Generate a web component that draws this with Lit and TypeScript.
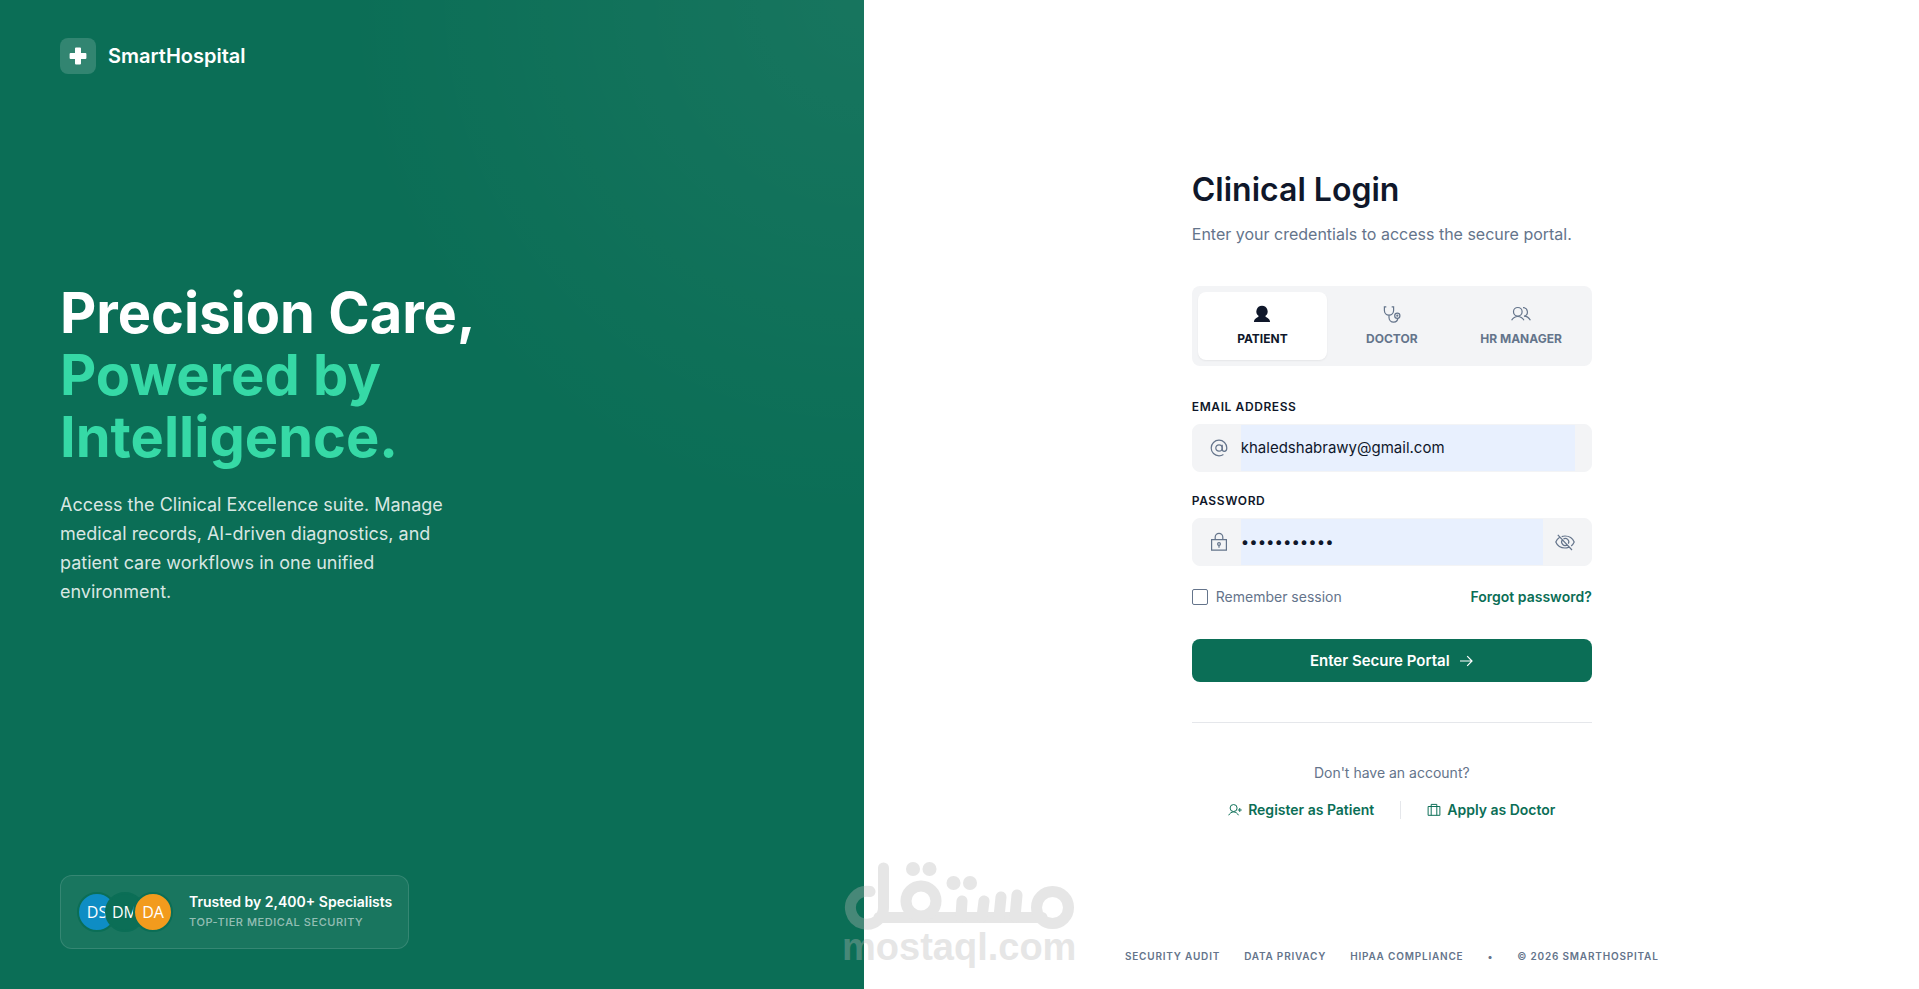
import { LitElement, html, css, svg } from "lit";
import { customElement, state } from "lit/decorators.js";

const icon = (size: number, body: unknown) => html`
  <svg class="icon ${size < 16 ? "small" : ""}" width=${size} height=${size} viewBox="0 0 20 20" aria-hidden="true">${body}</svg>
`;

const icons = {
  user: icon(20, svg`<path class="solid" d="M10 1.700a5.700 5.700 0 0 1 3.300 10.300c0 1.200 4.700 2.200 4.800 5.900H1.900c.1-3.700 4.800-4.700 4.800-5.900A5.700 5.700 0 0 1 10 1.700z"/>`),
  stethoscope: icon(20, svg`
    <path d="M4.300 2.800H2.400v3.700a4.600 4.600 0 0 0 9.200 0V2.800H9.700M7 11.100v2.400a4.600 4.600 0 0 0 4.600 4.600c2.600 0 4.200-1.900 4.200-4.100"/>
    <circle cx="15.300" cy="11.700" r="2.600"/><circle cx="15.300" cy="11.700" r=".5"/>`),
  users: icon(20, svg`
    <circle cx="6.800" cy="7.800" r="4.300"/>
    <path d="M.6 16.300c1.500-2.500 3.700-3.800 6.200-3.800s4.700 1.300 6.200 3.800M12 3.700a4.300 4.300 0 0 1 1 8.500c2.500 0 4.900 1.500 6.400 4.100"/>`),
  at: icon(20, svg`
    <circle cx="10" cy="10" r="3.200"/>
    <path d="M13.200 6.800V11c0 1.600.8 2.300 2 2.300s2.600-1.100 2.600-3.300A7.800 7.800 0 1 0 10 17.800c1.700 0 3.200-.5 4.400-1.300"/>`),
  lock: icon(20, svg`
    <path d="M2.600 7.600h14.800v10.600H2.600zM6.200 7.600V5.100a3.800 3.800 0 0 1 7.600 0v2.500M10 13.400v2.300"/>
    <circle cx="10" cy="12" r="1.400"/>`),
  eyeOff: icon(20, svg`
    <path d="M2.800 2.800 17 18M6.700 4.600A10 10 0 0 1 10 4c4.300 0 7.700 2.400 9.200 6-.7 1.600-1.700 3-3 4M13.800 15.200c-1.200.5-2.500.8-3.800.8-4.300 0-7.700-2.400-9.200-6 .8-1.900 2-3.400 3.600-4.400M8.400 6.900a3.500 3.500 0 0 1 4.900 4.700M12.300 12.700a3.500 3.500 0 0 1-5-4.800"/>`),
  arrow: icon(16, svg`<path d="M2.500 10h15M11.500 4l6 6-6 6"/>`),
  userPlus: icon(14, svg`
    <circle cx="8" cy="7.200" r="5"/>
    <path d="M1 17.500c1.600-3 4-4.700 7-4.700s5.400 1.700 7 4.700M14 10h5.600M16.800 7.200v5.600"/>`),
  kit: icon(14, svg`<path d="M1.600 5h16.800v12.600H1.600zM6 17.600V2h8v15.600"/>`),
};

const roles = [
  { id: "patient", label: "Patient", glyph: icons.user },
  { id: "doctor", label: "Doctor", glyph: icons.stethoscope },
  { id: "hr", label: "HR Manager", glyph: icons.users },
];

@customElement("app-root")
export class AppRoot extends LitElement {
  @state() private role = "patient";
  @state() private reveal = false;

  static styles = css`
    :host {
      --primary: #0b6e56;
      --ink: #0f172a;
      --muted: #64748b;
      --field: #f3f4f6;
      display: grid;
      grid-template-columns: 45% 1fr;
      min-height: 100vh;
      position: relative;
      overflow: hidden;
      background: #fff;
      color: var(--ink);
      font: 400 14px/20px Inter, "Liberation Sans", sans-serif;
    }
    * { box-sizing: border-box; }
    h1, h2, p { margin: 0; }
    a { color: var(--primary); text-decoration: none; font-weight: 600; }
    button { font: inherit; border: 0; background: none; padding: 0; cursor: pointer; color: inherit; }
    .icon { display: block; flex: none; fill: none; stroke: currentColor; stroke-width: 1.2; }
    .icon.small { stroke-width: 1.4; }
    .solid { fill: currentColor; stroke: none; }

    .brand-pane {
      display: flex;
      flex-direction: column;
      justify-content: space-between;
      align-items: flex-start;
      padding: 38px 60px 40px;
      color: #fff;
      background: radial-gradient(circle at top right, rgba(255, 255, 255, 0.05), transparent 40%) var(--primary);
    }
    .brand { display: flex; align-items: center; gap: 12px; font-size: 20px; line-height: 24px; font-weight: 600; }
    .brand-mark {
      display: grid;
      place-items: center;
      width: 36px;
      height: 36px;
      border-radius: 8px;
      background: rgba(255, 255, 255, 0.16);
    }
    .pitch { max-width: 480px; margin-bottom: 62px; }
    .pitch h1 { font-size: 56px; line-height: 62px; font-weight: 700; }
    .accent { color: #36d9a6; }
    .pitch p { max-width: 400px; margin-top: 22px; font-size: 18px; line-height: 29px; color: rgba(255, 255, 255, 0.85); }
    .trust {
      display: flex;
      align-items: center;
      gap: 16px;
      padding: 16px;
      border: 1px solid rgba(255, 255, 255, 0.12);
      border-radius: 12px;
      background: rgba(255, 255, 255, 0.06);
    }
    .avatars { display: flex; }
    .avatar {
      display: grid;
      place-items: center;
      width: 40px;
      height: 40px;
      border: 2px solid var(--primary);
      border-radius: 50%;
      font: 400 16px/20px "Open Sans", sans-serif;
    }
    .avatar + .avatar { margin-left: -12px; }
    .blue { background: #0e8dc4; }
    .green { background: var(--primary); }
    .orange { background: #f29b1d; }
    .trust strong { display: block; font-size: 14px; line-height: 20px; font-weight: 600; }
    .trust small { display: block; font-size: 11px; line-height: 20px; font-weight: 500; letter-spacing: 0.05em; text-transform: uppercase; color: rgba(255, 255, 255, 0.55); }

    .login-pane { display: flex; flex-direction: column; align-items: center; justify-content: space-between; padding: 168px 24px 25px 25px; }
    .panel { width: 100%; max-width: 400px; }
    .panel h2 { font-size: 32px; line-height: 44px; font-weight: 600; }
    .lead { margin-top: 10px; font-size: 16px; line-height: 24px; color: var(--muted); }
    .tabs { display: grid; grid-template-columns: repeat(3, 1fr); margin-top: 40px; padding: 6px; border-radius: 8px; background: var(--field); }
    .tab {
      display: flex;
      flex-direction: column;
      align-items: center;
      gap: 8px;
      padding: 12px 4px 14px;
      border-radius: 8px;
      font-size: 12px;
      line-height: 14px;
      font-weight: 700;
      text-transform: uppercase;
      color: var(--muted);
    }
    .tab.active { color: var(--ink); background: #fff; box-shadow: 0 1px 2px rgba(0, 0, 0, 0.06); }
    .fields { display: grid; gap: 20px; margin-top: 32px; }
    .field label { display: block; margin-bottom: 8px; font-size: 12px; line-height: 18px; font-weight: 600; letter-spacing: 0.05em; text-transform: uppercase; }
    .box {
      display: flex;
      align-items: center;
      gap: 12px;
      height: 48px;
      padding: 0 16px;
      border: 1px solid var(--field);
      border-radius: 8px;
      background: var(--field);
      color: var(--muted);
    }
    .box input {
      flex: 1;
      min-width: 0;
      align-self: stretch;
      border: 0;
      outline: 0;
      padding: 0;
      background: #e8f0fe;
      color: var(--ink);
      font: 400 15px/20px Inter, "Liberation Sans", sans-serif;
    }
    .options { display: flex; align-items: center; justify-content: space-between; margin-top: 21px; line-height: 20px; }
    .remember { display: flex; align-items: center; gap: 8px; color: var(--muted); }
    .remember input {
      appearance: none;
      width: 16px;
      height: 16px;
      margin: 0;
      border: 1px solid var(--muted);
      border-radius: 2px;
      background: #fff;
    }
    .remember input:checked { background: var(--primary); }
    .submit {
      display: flex;
      align-items: center;
      justify-content: center;
      gap: 8px;
      width: 100%;
      height: 43px;
      margin-top: 32px;
      border-radius: 8px;
      background: var(--primary);
      color: #fff;
      font-size: 15px;
      font-weight: 600;
    }
    .submit .icon { stroke-width: 1.5; }
    .join { margin-top: 40px; padding-top: 40px; border-top: 1px solid #e5e7eb; text-align: center; color: var(--muted); }
    .join-links { display: flex; align-items: center; justify-content: center; gap: 26px; margin-top: 17px; }
    .join-links a { display: flex; align-items: center; gap: 6px; }
    .rule { width: 1px; height: 18px; background: #e5e7eb; }
    .legal {
      display: flex;
      flex-wrap: wrap;
      justify-content: center;
      gap: 24px;
      font-size: 10px;
      line-height: 16px;
      font-weight: 600;
      letter-spacing: 0.08em;
      text-transform: uppercase;
      color: var(--muted);
    }
    .legal a { color: inherit; }
    .watermark { position: absolute; left: 45%; bottom: 17px; margin-left: -22px; width: 236px; height: 112px; pointer-events: none; }
    .watermark text { font: 700 38px "Liberation Sans", sans-serif; }
  `;

  render() {
    return html`
      <section class="brand-pane">
        <div class="brand">
          <span class="brand-mark">
            <svg width="18" height="18" viewBox="0 0 18 18" aria-hidden="true">
              <path fill="#fff" d="M7 .6h4q1 0 1 1V6h4.400q1 0 1 1v4q0 1-1 1H12v4.400q0 1-1 1H7q-1 0-1-1V12H1.600q-1 0-1-1V7q0-1 1-1H6V1.600q0-1 1-1z" />
            </svg>
          </span>
          <span>SmartHospital</span>
        </div>
        <div class="pitch">
          <h1>Precision Care,<br /><span class="accent">Powered by<br />Intelligence.</span></h1>
          <p>Access the Clinical Excellence suite. Manage medical records, AI-driven diagnostics, and patient care workflows in one unified environment.</p>
        </div>
        <div class="trust">
          <div class="avatars">
            <span class="avatar blue">DS</span><span class="avatar green">DM</span><span class="avatar orange">DA</span>
          </div>
          <div>
            <strong>Trusted by 2,400+ Specialists</strong>
            <small>Top-Tier Medical Security</small>
          </div>
        </div>
      </section>

      <main class="login-pane">
        <form class="panel" @submit=${(e: Event) => e.preventDefault()}>
          <h2>Clinical Login</h2>
          <p class="lead">Enter your credentials to access the secure portal.</p>
          <div class="tabs" role="tablist">
            ${roles.map((r) => html`
              <button type="button" role="tab" class="tab ${r.id === this.role ? "active" : ""}"
                aria-selected=${r.id === this.role} @click=${() => (this.role = r.id)}>
                ${r.glyph}<span>${r.label}</span>
              </button>`)}
          </div>
          <div class="fields">
            <div class="field">
              <label for="email">Email Address</label>
              <div class="box">${icons.at}<input id="email" type="email" .value=${"khaledshabrawy@gmail.com"} /></div>
            </div>
            <div class="field">
              <label for="password">Password</label>
              <div class="box">
                ${icons.lock}<input id="password" type=${this.reveal ? "text" : "password"} .value=${"smartclinic"} />
                <button type="button" aria-label="Show password" @click=${() => (this.reveal = !this.reveal)}>${icons.eyeOff}</button>
              </div>
            </div>
          </div>
          <div class="options">
            <label class="remember"><input type="checkbox" />Remember session</label>
            <a href="#forgot">Forgot password?</a>
          </div>
          <button class="submit" type="submit">Enter Secure Portal ${icons.arrow}</button>
          <div class="join">
            <p>Don't have an account?</p>
            <div class="join-links">
              <a href="#register">${icons.userPlus}Register as Patient</a>
              <span class="rule"></span>
              <a href="#apply">${icons.kit}Apply as Doctor</a>
            </div>
          </div>
        </form>
        <footer class="legal">
          <a href="#audit">Security Audit</a>
          <a href="#privacy">Data Privacy</a>
          <a href="#hipaa">HIPAA Compliance</a>
          <span>•</span>
          <span>© 2026 SmartHospital</span>
        </footer>
      </main>

      <svg class="watermark" viewBox="0 0 236 112" aria-hidden="true">
        <g opacity="0.35" fill="#b8b8b8" stroke="#b8b8b8">
          <g fill="none" stroke-width="11" stroke-linecap="round">
            <path d="M28 31.500A16.500 16.500 0 1 0 36 60Q41.500 55 41.500 48V8M37 57.500H200" />
            <circle cx="79" cy="41" r="15" />
            <circle cx="210.500" cy="47.500" r="16" />
            <path d="M119 57l1-16M140 57l2-16M157 57l2-20M173 57l2-22" />
          </g>
          <g stroke="none">
            <circle cx="71" cy="9" r="7" /><circle cx="87.500" cy="9" r="7" />
            <circle cx="111.500" cy="23" r="7" /><circle cx="128" cy="23" r="7" />
            <text x="0" y="100">mostaql.com</text>
          </g>
        </g>
      </svg>
    `;
  }
}
